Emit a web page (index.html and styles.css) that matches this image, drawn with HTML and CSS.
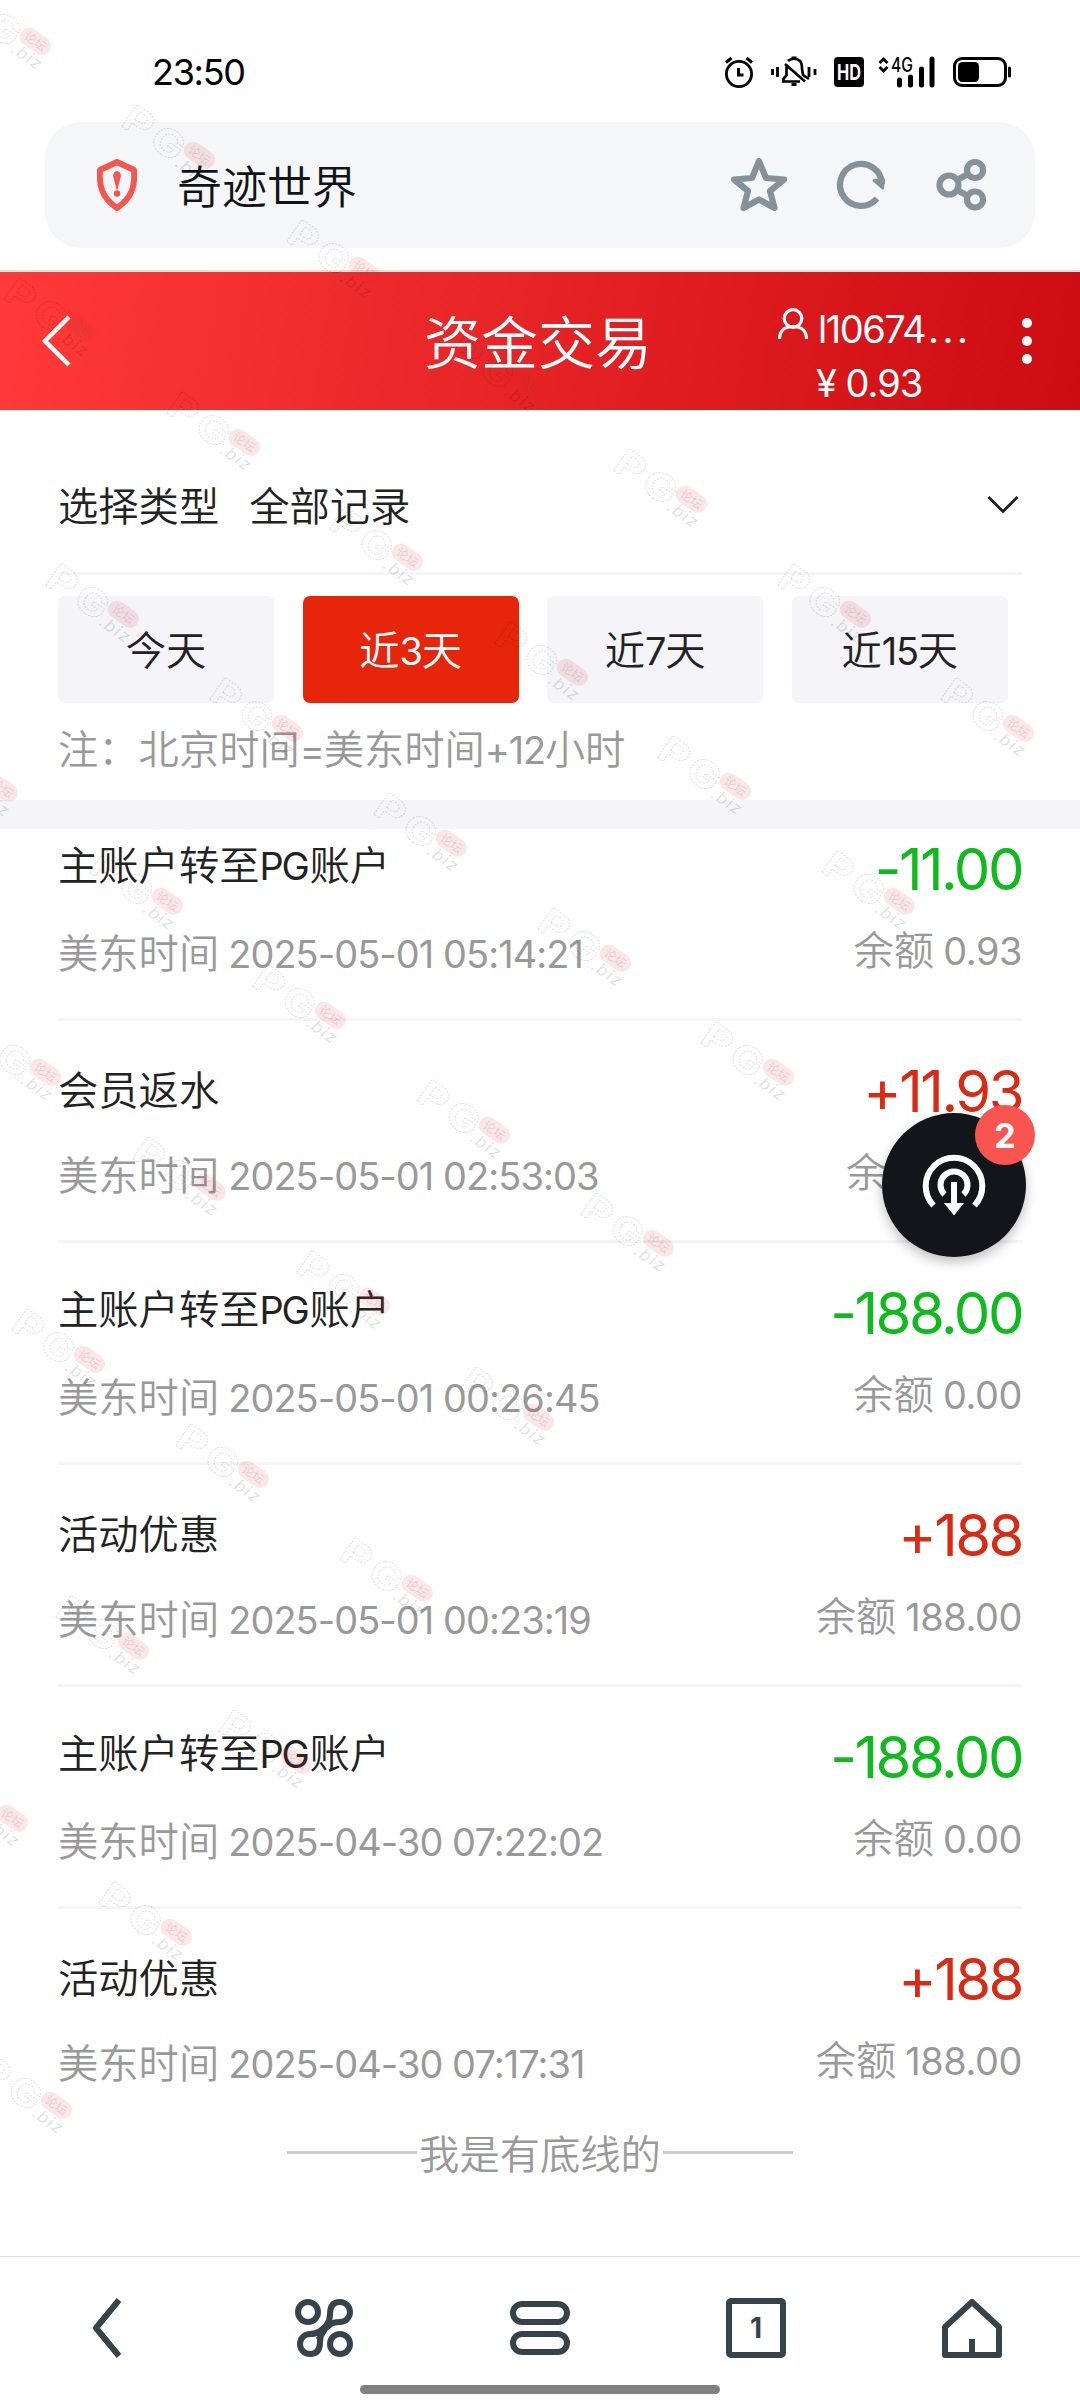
FILE: index.html
```html
<!DOCTYPE html>
<html lang="zh-CN">
<head>
<meta charset="utf-8">
<title>资金交易</title>
<link rel="stylesheet" href="styles.css">
</head>
<body>
<div class="screen">
  <div class="status">
    <span class="clock">23:50</span>
    <svg class="status-icons" width="290" height="32" viewBox="0 0 290 32" fill="none" stroke="#000">
      <circle cx="14" cy="18" r="12.600" stroke-width="2.800"/>
      <path d="M13.500 12v7h5M1 6.500l5.500-4.500M27 6.500l-5.500-4.500" stroke-width="3"/>
      <path d="M47.500 13v6M52.500 11v10M84 11v10M90 13v6" stroke-width="2.800"/>
      <path d="M57 25.500h18M58.500 25v-2.500l3-3v-9M63 5c3-3 9-3 12 0 2 2 2 4 2 8l1 6 6 4M60 8l20 17.500" stroke-width="2.700"/>
      <path d="M66.500 2h5M66.500 28.500h5" stroke-width="3"/>
      <rect x="109" y="1" width="30" height="30" rx="4" fill="#000" stroke="none"/>
      <text class="hd" x="124" y="23.500" textLength="24" lengthAdjust="spacingAndGlyphs">HD</text>
      <path d="M154.500 7l4-4 4 4M154.500 11l4 4 4-4" stroke-width="2.800"/>
      <text class="net" x="166" y="16" textLength="22" lengthAdjust="spacingAndGlyphs">4G</text>
      <path d="M174.500 24v5M185.500 21v8M196.500 13v16M207 3v26" stroke-width="5" stroke-linecap="round"/>
      <rect x="229.500" y="2.500" width="51" height="27" rx="7.500" stroke-width="3"/>
      <rect x="233" y="6" width="21" height="20" rx="4.500" fill="#000" stroke="none"/>
      <path d="M284.500 12v8" stroke-width="3" stroke-linecap="round"/>
    </svg>
  </div>

  <div class="address">
    <svg width="40" height="52" viewBox="0 0 40 52">
      <path d="M20 3L37 11c1 15-1 27-17 38C4 38 2 26 3 11z" fill="none" stroke="#f65650" stroke-width="6" stroke-linejoin="round"/>
      <path d="M17 13.500q3-3 6 0l1 3-3.500 14h-1L16 16.500z" fill="#f65650"/><circle cx="20" cy="34.500" r="3.200" fill="#f65650"/>
    </svg>
    <span class="site">奇迹世界</span>
    <svg class="tools" width="256" height="56" viewBox="0 0 256 56" fill="none" stroke="#859299" stroke-width="6.200" stroke-linejoin="round">
      <path d="M28 4l7 17 18 1.500-14 11.500 4.500 17L28 42.500 12.500 51 17 34 3 22.500 21 21z"/>
      <path d="M146 41.500A21 21 0 1 1 151 27"/>
      <path d="M143 23.500l8.500 7.500 1-8z" fill="#859299" stroke-width="3"/>
      <circle cx="218" cy="28" r="9.500"/><circle cx="244" cy="13" r="8"/><circle cx="244" cy="42.500" r="8"/>
      <path d="M226 23l11-6M226 33l11 6"/>
    </svg>
  </div>

  <header class="header">
    <svg class="back" width="30" height="54" viewBox="0 0 30 54"><path d="M28 3L4 27l24 24" fill="none" stroke="#fff" stroke-width="4.500"/></svg>
    <h1>资金交易</h1>
    <div class="account">
      <div class="user">
        <svg width="30" height="32" viewBox="0 0 30 32" fill="none" stroke="#fff" stroke-width="3.200"><circle cx="15" cy="10.500" r="8.800"/><path d="M1.500 31c0-8 5-12.500 13.500-12.500S28.500 23 28.500 31"/></svg>
        <span class="user-name">l10674<span class="dots">...</span></span>
      </div>
      <div class="wallet">¥ 0.93</div>
    </div>
    <svg class="more" width="12" height="50" viewBox="0 0 12 50" fill="#fff"><circle cx="6" cy="7" r="5"/><circle cx="6" cy="25" r="5"/><circle cx="6" cy="43" r="5"/></svg>
  </header>

  <section class="filter">
    <div class="type">
      <span>选择类型</span><span class="type-value">全部记录</span>
      <svg width="32" height="20" viewBox="0 0 32 20"><path d="M1.500 2L16 16.500 30.500 2" fill="none" stroke="#222" stroke-width="2.800"/></svg>
    </div>
    <div class="ranges">
      <button>今天</button>
      <button class="active">近<i>3</i>天</button>
      <button>近<i>7</i>天</button>
      <button>近<i>15</i>天</button>
    </div>
    <p class="note">注：北京时间<i>=</i>美东时间<i>+12</i>小时</p>
  </section>

  <main class="list">
    <article class="row">
      <div class="info"><p class="name">主账户转至<i>PG</i>账户</p><p class="time">美东时间 <i>2025-05-01 05:14:21</i></p></div>
      <div class="money"><p class="amount out">-11.00</p><p class="balance">余额 <i>0.93</i></p></div>
    </article>
    <article class="row">
      <div class="info"><p class="name">会员返水</p><p class="time">美东时间 <i>2025-05-01 02:53:03</i></p></div>
      <div class="money"><p class="amount in">+11.93</p><p class="balance">余额 <i>11.93</i></p></div>
    </article>
    <article class="row">
      <div class="info"><p class="name">主账户转至<i>PG</i>账户</p><p class="time">美东时间 <i>2025-05-01 00:26:45</i></p></div>
      <div class="money"><p class="amount out">-188.00</p><p class="balance">余额 <i>0.00</i></p></div>
    </article>
    <article class="row">
      <div class="info"><p class="name">活动优惠</p><p class="time">美东时间 <i>2025-05-01 00:23:19</i></p></div>
      <div class="money"><p class="amount in">+188</p><p class="balance">余额 <i>188.00</i></p></div>
    </article>
    <article class="row">
      <div class="info"><p class="name">主账户转至<i>PG</i>账户</p><p class="time">美东时间 <i>2025-04-30 07:22:02</i></p></div>
      <div class="money"><p class="amount out">-188.00</p><p class="balance">余额 <i>0.00</i></p></div>
    </article>
    <article class="row">
      <div class="info"><p class="name">活动优惠</p><p class="time">美东时间 <i>2025-04-30 07:17:31</i></p></div>
      <div class="money"><p class="amount in">+188</p><p class="balance">余额 <i>188.00</i></p></div>
    </article>
    <div class="end">我是有底线的</div>
  </main>

  <nav class="nav">
    <div class="tab"><svg width="64" height="64" viewBox="0 0 64 64"><path d="M43 4L20 32l23 28"/></svg></div>
    <div class="tab"><svg width="64" height="64" viewBox="0 0 64 64"><circle cx="16" cy="16" r="10"/><circle cx="48" cy="48" r="10"/><path d="M48 6a10 10 0 0 1 0 20C32 26 32 38 26 44M48 6c-8 0-10 6-10 12 0 10-6 14-10 17-4 3-8 3-10 3a10 10 0 0 0 0 20c8 0 10-6 10-12 0-10 6-14 10-17"/></svg></div>
    <div class="tab"><svg width="64" height="64" viewBox="0 0 64 64"><rect x="5" y="8" width="54" height="18" rx="9"/><rect x="5" y="38" width="54" height="18" rx="9"/></svg></div>
    <div class="tab"><svg width="64" height="64" viewBox="0 0 64 64"><rect x="5" y="5" width="54" height="54" rx="2"/><text class="tabs-count" x="32" y="42">1</text></svg></div>
    <div class="tab"><svg width="64" height="64" viewBox="0 0 64 64"><path d="M32 6L5 31v28h54V31zM32 43v16"/></svg></div>
  </nav>

  <div class="float">
    <svg width="66" height="66" viewBox="0 0 66 66" fill="none" stroke="#fff" stroke-width="6"><path d="M12.500 53.500A28.300 28.300 0 1 1 53.500 53.500M23.500 42.500A13.500 13.500 0 1 1 42.500 42.500M33 30v24"/><path d="M23 51h20L33 63.500z" fill="#fff" stroke="none"/></svg>
    <span class="badge">2</span>
  </div>
  <div class="home-indicator"></div>

  <svg class="marks" width="1080" height="2400" viewBox="0 0 1080 2400">
    <defs>
      <g id="mark">
        <g transform="translate(1 22) rotate(35)">
          <text class="mark-pg" x="-2" y="0" textLength="29" lengthAdjust="spacingAndGlyphs">P</text><text class="mark-pg" x="32" y="0" textLength="33" lengthAdjust="spacingAndGlyphs">G</text>
          <rect x="64" y="-30" width="34" height="18" rx="9" fill="#f01820" fill-opacity=".11"/>
          <text class="mark-cn" x="81" y="-16.500">论坛</text>
          <text class="mark-biz" x="66" y="2" textLength="33">.biz</text>
        </g>
      </g>
    </defs>
    <use href="#mark" x="-44" y="-10"/><use href="#mark" x="120" y="104"/><use href="#mark" x="285" y="219"/><use href="#mark" x="449" y="333"/><use href="#mark" x="612" y="448"/><use href="#mark" x="776" y="563"/><use href="#mark" x="939" y="677"/>
    <use href="#mark" x="2" y="277"/><use href="#mark" x="165" y="391"/><use href="#mark" x="328" y="506"/><use href="#mark" x="493" y="621"/><use href="#mark" x="656" y="735"/><use href="#mark" x="820" y="850"/>
    <use href="#mark" x="44" y="563"/><use href="#mark" x="208" y="677"/><use href="#mark" x="372" y="792"/><use href="#mark" x="536" y="907"/><use href="#mark" x="699" y="1021"/>
    <use href="#mark" x="-77" y="737"/><use href="#mark" x="88" y="850"/><use href="#mark" x="251" y="964"/><use href="#mark" x="415" y="1079"/><use href="#mark" x="579" y="1192"/>
    <use href="#mark" x="-34" y="1021"/><use href="#mark" x="131" y="1136"/><use href="#mark" x="295" y="1250"/><use href="#mark" x="459" y="1366"/>
    <use href="#mark" x="10" y="1308"/><use href="#mark" x="174" y="1423"/><use href="#mark" x="338" y="1537"/>
    <use href="#mark" x="54" y="1595"/><use href="#mark" x="217" y="1709"/>
    <use href="#mark" x="-67" y="1767"/><use href="#mark" x="97" y="1881"/><use href="#mark" x="-23" y="2054"/>
  </svg>
</div>
</body>
</html>
```
FILE: styles.css
```css
* { box-sizing: border-box; }
body, p, h1 { margin: 0; }
body {
  background: #fff;
  color: #222;
  font-family: "Noto Sans CJK SC", sans-serif;
  font-weight: 350;
  font-size: 40.300px;
}
i {
  font-family: Inter, sans-serif;
  font-style: normal;
  font-weight: 400;
  font-size: .94em;
  letter-spacing: -1.200px;
}
.screen {
  position: relative;
  display: flex;
  flex-direction: column;
  width: 1080px;
  height: 2400px;
  overflow: hidden;
}

.status {
  display: flex;
  justify-content: space-between;
  align-items: flex-start;
  height: 122px;
  padding: 56px 65px 0 152px;
}
.status-icons { overflow: visible; }
.clock {
  color: #000;
  font: 400 36px/32px Inter, sans-serif;
  letter-spacing: -1.300px;
}
.hd {
  font: 700 21px Inter, sans-serif;
  fill: #fff;
  stroke: none;
  text-anchor: middle;
}
.net {
  font: 500 20px Inter, sans-serif;
  fill: #000;
  stroke: none;
}

.address {
  display: flex;
  align-items: center;
  height: 126px;
  margin: 0 45px;
  padding: 0 48px 0 52px;
  border-radius: 36px;
  background: #f4f6f8;
  color: #101418;
  font-size: 45px;
}
.site { margin-left: 40px; line-height: 60px; }
.tools { margin-left: auto; }

.header {
  display: flex;
  align-items: center;
  height: 140px;
  margin-top: 22px;
  border-top: 2px solid #e2e2e4;
  background: linear-gradient(100deg, #ff3a38, #cc0c12);
  color: #fff;
}
.back { margin-left: 41px; }
.header h1 {
  width: 228px;
  margin-left: 353px;
  padding-bottom: 5px;
  font-size: 57px;
  line-height: 80px;
  font-weight: 350;
  white-space: nowrap;
}
.account {
  width: 194px;
  margin-left: 126px;
  padding-top: 30px;
  font: 400 38px/54px Inter, sans-serif;
}
.user { display: flex; align-items: center; gap: 10px; }
.user svg { margin-top: -11px; }
.user-name { letter-spacing: -1.500px; }
.dots { letter-spacing: 3.500px; margin-left: 3px; }
.wallet { padding-left: 38px; letter-spacing: -1px; }
.more { margin-left: 49px; }

.filter {
  height: 419px;
  padding: 0 58px;
  border-bottom: 29px solid #f4f4f9;
}
.type {
  display: flex;
  align-items: center;
  height: 165px;
  padding: 25px 3px 0 0;
  border-bottom: 3px solid #f4f4f9;
}
.type-value { margin-left: 30px; }
.type svg { margin: 3px 0 0 auto; }
.ranges { display: flex; gap: 28.600px; padding-top: 21px; }
.ranges button {
  width: 216px;
  height: 107px;
  padding: 0 0 4px;
  border: 0;
  border-radius: 7px;
  background: #f4f4f9;
  color: #222;
  font: inherit;
}
.ranges .active { background: #e7250b; color: #fff; }
.note { margin-top: 14px; color: #999; line-height: 60px; }

.list { height: 1427px; padding: 0 58px; }
.row {
  display: flex;
  justify-content: space-between;
  align-items: flex-end;
  height: 222.100px;
  padding-bottom: 34px;
  border-bottom: 3px solid #f4f4f9;
  line-height: 60px;
  white-space: nowrap;
}
.row:first-child { height: 192px; }
.row:nth-child(6) { border-color: transparent; }
.name { margin-bottom: 25px; }
.name i { letter-spacing: -2.200px; margin-right: 2px; }
.time, .balance { color: #999; }
.time i { letter-spacing: -.900px; }
.money { text-align: right; }
.amount {
  margin-bottom: 17px;
  font: 400 58px/64px Inter, sans-serif;
  letter-spacing: -2.500px;
}
.in { color: #db2a14; }
.out { color: #0dbb1b; }
.balance { margin-bottom: 3px; }
.balance i { letter-spacing: -.400px; }

.end {
  display: flex;
  justify-content: center;
  align-items: center;
  gap: 2px;
  height: 42px;
  line-height: 38px;
  color: #999;
}
.end::before, .end::after {
  content: "";
  width: 130px;
  height: 3px;
  background: #ccc;
}

.nav {
  display: flex;
  height: 144px;
  border-top: 1px solid #dcdcdc;
}
.tab { flex: 1; padding-top: 39px; text-align: center; line-height: 0; }
.tab svg { fill: none; stroke: #36434a; stroke-width: 6px; stroke-linejoin: round; }
.tab .tabs-count {
  font: 700 28px Inter, sans-serif;
  fill: #36434a;
  stroke: none;
  text-anchor: middle;
}

.float {
  position: absolute;
  left: 882px;
  top: 1113px;
  display: grid;
  place-items: center;
  width: 144px;
  height: 144px;
  border-radius: 50%;
  background: #12151a;
  box-shadow: 0 5px 12px rgba(0, 0, 0, .25);
}
.badge {
  position: absolute;
  left: 93px;
  top: -8px;
  width: 60px;
  height: 60px;
  border-radius: 50%;
  background: #f95550;
  color: #fff;
  font: 700 34px/61px Inter, sans-serif;
  text-align: center;
}
.home-indicator {
  position: absolute;
  left: 360px;
  top: 2385px;
  width: 360px;
  height: 9px;
  border-radius: 5px;
  background: #808080;
}

.marks { position: absolute; left: 0; top: 0; pointer-events: none; }
.mark-pg {
  font: 700 37px Inter, sans-serif;
  fill: #000;
  fill-opacity: .025;
  stroke: #000;
  stroke-opacity: .14;
  stroke-width: 1px;
  stroke-dasharray: 2 1;
}
.mark-cn {
  font: 400 12px "Noto Sans CJK SC", sans-serif;
  fill: #507070;
  fill-opacity: .2;
  text-anchor: middle;
}
.mark-biz {
  font: italic 400 17px Inter, sans-serif;
  fill: #000;
  fill-opacity: .12;
}
```
